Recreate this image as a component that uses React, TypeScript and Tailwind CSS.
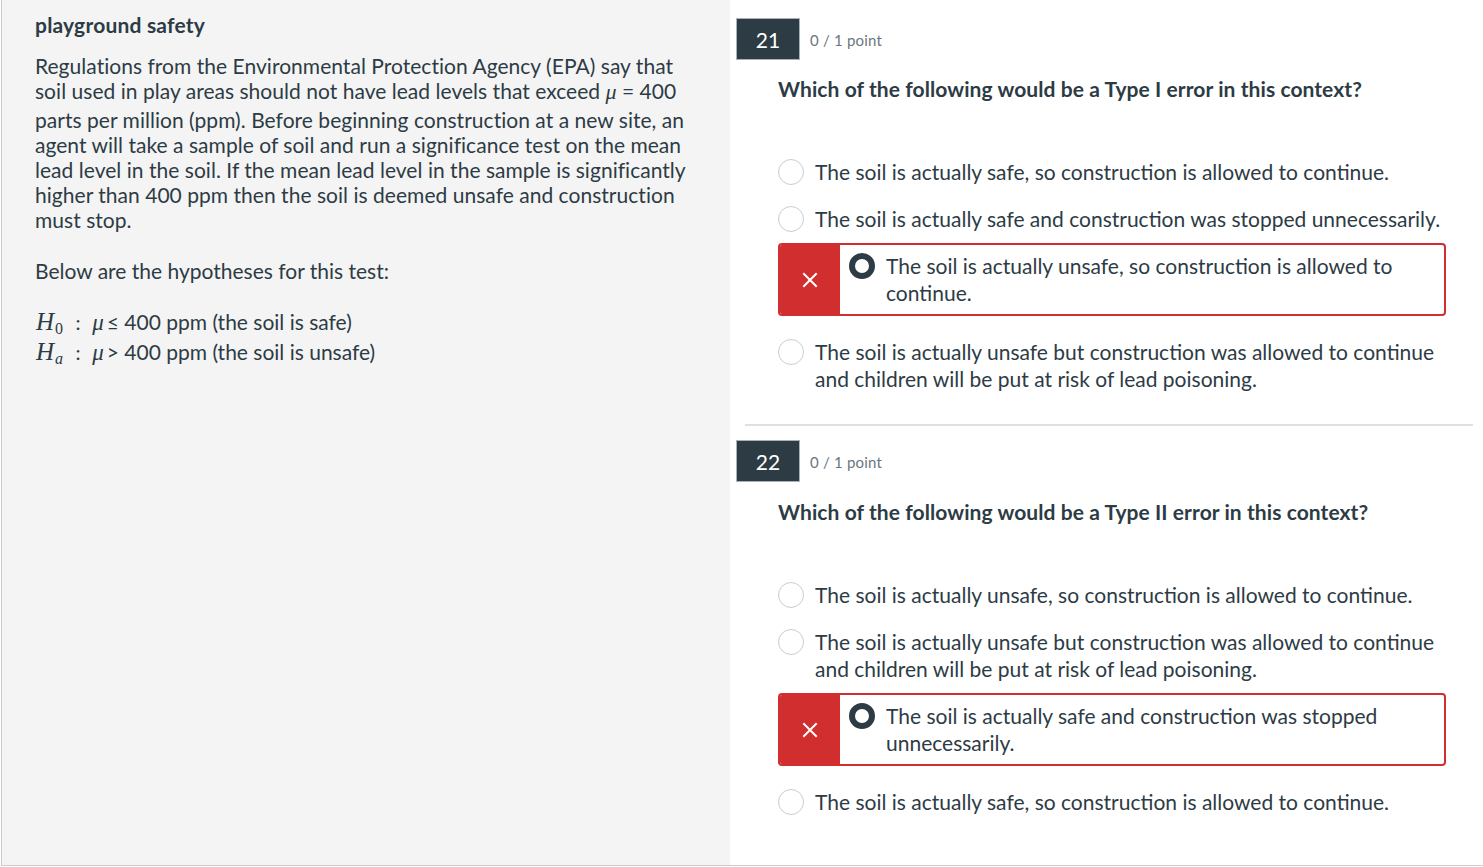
import React from "react";

const serif = { fontFamily: '"Liberation Serif", "DejaVu Serif", serif' };

const Mu = ({ size = "text-[22px]" }: { size?: string }) => (
  <span className={`italic leading-none ${size}`} style={serif}>
    μ
  </span>
);

function Radio({ selected }: { selected?: boolean }) {
  if (selected) {
    return <span className="inline-block h-[26px] w-[26px] shrink-0 rounded-full border-[6px] border-[#2d3b45] bg-white" />;
  }
  return <span className="inline-block h-[26px] w-[26px] shrink-0 rounded-full border border-[#c7cdd1] bg-white" />;
}

function Option({ children }: { children: React.ReactNode }) {
  return (
    <div className="flex items-start gap-[11px] pb-[10px] pt-[10px]">
      <div className="flex h-[27px] items-center">
        <Radio />
      </div>
      <div className="text-[21px] leading-[27px]">{children}</div>
    </div>
  );
}

function WrongOption({ children }: { children: React.ReactNode }) {
  return (
    <div className="mb-[12px] mt-[1px] flex overflow-hidden rounded-[4px] border-2 border-[#d12f2f]">
      <div className="flex w-[60px] shrink-0 items-center justify-center bg-[#d12f2f]">
        <svg width="16" height="16" viewBox="0 0 16 16">
          <path d="M2 2 L14 14 M14 2 L2 14" stroke="white" strokeWidth="2" strokeLinecap="square" />
        </svg>
      </div>
      <div className="flex items-start gap-[11px] bg-white pb-[8px] pl-[9px] pt-[7px]">
        <div className="flex h-[27px] items-center">
          <Radio selected />
        </div>
        <div className="text-[21px] leading-[27px]">{children}</div>
      </div>
    </div>
  );
}

function Header({ n }: { n: number }) {
  return (
    <div className="flex items-center">
      <div className="flex h-[42px] w-[64px] items-center justify-center border border-[#aab2b8] bg-[#2d3b45] pt-[2px] text-[21px] text-white">
        {n}
      </div>
      <div className="ml-[10px] pt-[2px] text-[15px] tracking-[0.2px] text-[#6b7780]">0 / 1 point</div>
    </div>
  );
}

function Hyp({ sub, italicSub, rest }: { sub: string; italicSub?: boolean; rest: string }) {
  return (
    <div className="h-[30px]">
      <span className="ml-[1px] italic text-[25px] leading-none" style={serif}>
        H
      </span>
      <span className={`relative top-[4px] ml-[1px] text-[16px] leading-none ${italicSub ? "italic" : ""}`} style={serif}>
        {sub}
      </span>
      <span className="ml-[12px] mr-[11px] text-[22px] leading-none" style={serif}>
        :
      </span>
      <Mu size="text-[23px]" />
      <span className="ml-[3px]">{rest}</span>
    </div>
  );
}

export default function App() {
  return (
    <div
      className="flex h-[867px] w-[1483px] overflow-hidden text-[#2d3b45]"
      style={{ fontFamily: 'Lato, "Open Sans", sans-serif' }}
    >
      <div className="ml-[1px] flex h-[866px] w-full border-b border-l border-[#c7cdd1]">
        {/* Left panel */}
        <div className="w-[728px] shrink-0 bg-[#f4f4f4] pl-[33px] pt-[11px]">
          <div className="text-[21px] font-bold leading-[28px] tracking-[0.2px]">playground safety</div>
          <div className="mt-[14px] text-[21px] leading-[25px] tracking-[0.03px]">
            Regulations from the Environmental Protection Agency (EPA) say that
            <br />
            soil used in play areas should not have lead levels that exceed <Mu /> = 400
            <br />
            <span className="mt-[4px] inline-block">parts per million (ppm). Before beginning construction at a new site, an</span>
            <br />
            agent will take a sample of soil and run a significance test on the mean
            <br />
            lead level in the soil. If the mean lead level in the sample is significantly
            <br />
            higher than 400 ppm then the soil is deemed unsafe and construction
            <br />
            must stop.
          </div>
          <div className="mt-[26px] text-[21px] leading-[25px]">Below are the hypotheses for this test:</div>
          <div className="mt-[24px] text-[21px] leading-[30px]">
            <Hyp sub="0" rest="≤ 400 ppm (the soil is safe)" />
            <Hyp sub="a" italicSub rest="> 400 ppm (the soil is unsafe)" />
          </div>
        </div>

        {/* Right panel */}
        <div className="flex-1 bg-white pl-[6px] pt-[18px]">
          <Header n={21} />
          <div className="pl-[42px] pr-[37px]">
            <div className="mt-[15px] text-[21px] font-bold leading-[28px] tracking-[0.08px]">
              Which of the following would be a Type I error in this context?
            </div>
            <div className="mt-[45px]">
              <Option>The soil is actually safe, so construction is allowed to continue.</Option>
              <Option>The soil is actually safe and construction was stopped unnecessarily.</Option>
              <WrongOption>
                The soil is actually unsafe, so construction is allowed to
                <br />
                continue.
              </WrongOption>
              <Option>
                The soil is actually unsafe but construction was allowed to continue
                <br />
                and children will be put at risk of lead poisoning.
              </Option>
            </div>
          </div>
          <div className="ml-[9px] mr-[10px] mt-[22px] border-t-2 border-[#dde1e4]" />
          <div className="mt-[14px]">
            <Header n={22} />
          </div>
          <div className="pl-[42px] pr-[37px]">
            <div className="mt-[16px] text-[21px] font-bold leading-[28px] tracking-[0.08px]">
              Which of the following would be a Type II error in this context?
            </div>
            <div className="mt-[45px]">
              <Option>The soil is actually unsafe, so construction is allowed to continue.</Option>
              <Option>
                The soil is actually unsafe but construction was allowed to continue
                <br />
                and children will be put at risk of lead poisoning.
              </Option>
              <WrongOption>
                The soil is actually safe and construction was stopped
                <br />
                unnecessarily.
              </WrongOption>
              <Option>The soil is actually safe, so construction is allowed to continue.</Option>
            </div>
          </div>
        </div>
      </div>
    </div>
  );
}
